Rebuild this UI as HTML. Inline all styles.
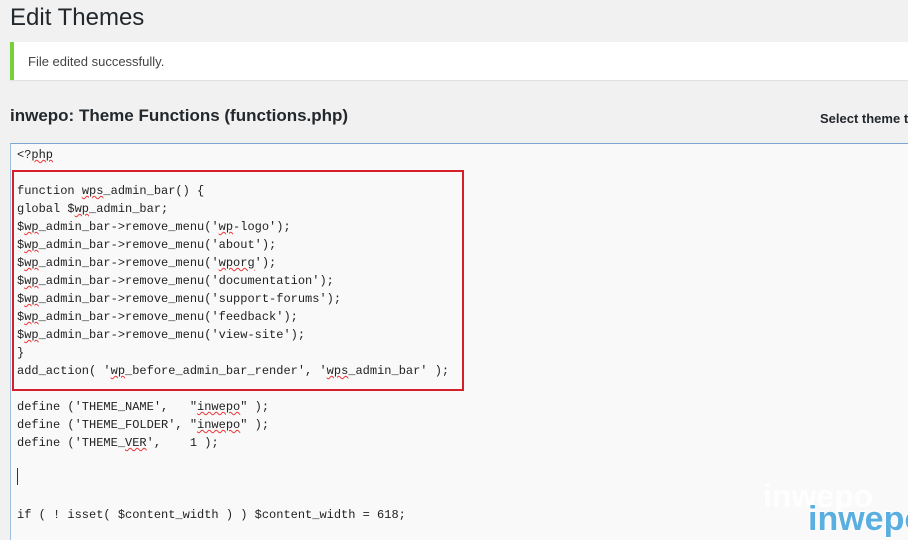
<!DOCTYPE html>
<html style="width:908px;height:540px;overflow:hidden"><head><style>
body{margin:0;width:908px;height:540px;background:#f1f1f1;font-family:"Liberation Sans",sans-serif;overflow:hidden;position:relative;color:#23282d}
h1{position:absolute;left:10px;top:4px;margin:0;font-weight:400;font-size:24px;color:#23282d}
.notice{position:absolute;left:10px;top:42px;width:898px;height:38px;background:#fff;border-left:4px solid #7ad03a;box-shadow:0 1px 1px rgba(0,0,0,.08)}
.notice span{position:absolute;left:14px;top:12px;font-size:13px;color:#444}
h2{position:absolute;left:10px;top:106px;margin:0;font-size:17px;font-weight:600;color:#23282d}
.sel{position:absolute;left:820px;top:111px;font-size:13px;font-weight:600;color:#23282d;white-space:nowrap}
.ed{position:absolute;left:10px;top:143px;width:910px;height:410px;background:#f9f9f9;border:1px solid #ddd;border-top-color:#7aa6d0;border-left-color:#a0bede}
pre{position:absolute;left:17px;top:146px;margin:0;font-family:"Liberation Mono",monospace;font-size:12px;line-height:18px;color:#222}
u{text-decoration:underline wavy #e33;text-decoration-thickness:1px}
.box{position:absolute;left:12px;top:170px;width:448px;height:217px;border:2px solid #d5202a}
.cur{position:absolute;left:17px;top:468px;width:1px;height:17px;background:#333}
.wm{position:absolute;font-weight:700;font-family:"Liberation Sans",sans-serif}
</style></head><body>
<h1>Edit Themes</h1>
<div class="notice"><span>File edited successfully.</span></div>
<h2>inwepo: Theme Functions (functions.php)</h2>
<div class="sel">Select theme t</div>
<div class="ed"></div>
<pre>&lt;?<u>php</u>

function <u>wps</u>_admin_bar() {
global $<u>wp</u>_admin_bar;
$<u>wp</u>_admin_bar-&gt;remove_menu('<u>wp</u>-logo');
$<u>wp</u>_admin_bar-&gt;remove_menu('about');
$<u>wp</u>_admin_bar-&gt;remove_menu('<u>wporg</u>');
$<u>wp</u>_admin_bar-&gt;remove_menu('documentation');
$<u>wp</u>_admin_bar-&gt;remove_menu('support-forums');
$<u>wp</u>_admin_bar-&gt;remove_menu('feedback');
$<u>wp</u>_admin_bar-&gt;remove_menu('view-site');
}
add_action( '<u>wp</u>_before_admin_bar_render', '<u>wps</u>_admin_bar' );

define ('THEME_NAME',   "<u>inwepo</u>" );
define ('THEME_FOLDER', "<u>inwepo</u>" );
define ('THEME_<u>VER</u>',    1 );



if ( ! isset( $content_width ) ) $content_width = 618;</pre>
<div class="box"></div>
<div class="cur"></div>
<div class="wm" style="left:763px;top:478px;font-size:32px;color:#fff;opacity:.9">inwepo</div>
<div class="wm" style="left:808px;top:500px;font-size:34px;color:#5aaee0;-webkit-text-stroke:2px #fff;paint-order:stroke fill">inwepo</div>
</body></html>
